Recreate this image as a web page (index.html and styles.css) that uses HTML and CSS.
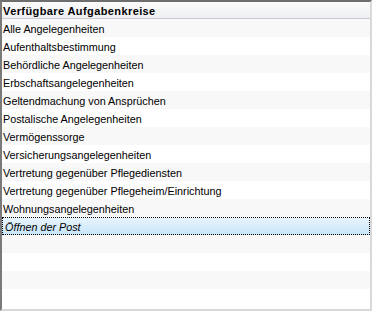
FILE: index.html
```html
<!DOCTYPE html>
<html lang="de">
<head>
<meta charset="utf-8">
<title>Verfügbare Aufgabenkreise</title>
<link rel="stylesheet" href="styles.css">
</head>
<body>
<div class="grid">
  <div class="head">Verfügbare Aufgabenkreise</div>
  <div class="rows">
    <div class="row">Alle Angelegenheiten</div>
    <div class="row">Aufenthaltsbestimmung</div>
    <div class="row">Behördliche Angelegenheiten</div>
    <div class="row">Erbschaftsangelegenheiten</div>
    <div class="row">Geltendmachung von Ansprüchen</div>
    <div class="row">Postalische Angelegenheiten</div>
    <div class="row">Vermögenssorge</div>
    <div class="row">Versicherungsangelegenheiten</div>
    <div class="row">Vertretung gegenüber Pflegediensten</div>
    <div class="row">Vertretung gegenüber Pflegeheim/Einrichtung</div>
    <div class="row">Wohnungsangelegenheiten</div>
    <div class="row selected">Öffnen der Post</div>
    <div class="row"></div>
    <div class="row"></div>
    <div class="row"></div>
    <div class="row"></div>
  </div>
</div>
</body>
</html>
```
FILE: styles.css
```css
html, body {
  margin: 0;
  padding: 0;
  background: #ffffff;
}
.grid {
  width: 372px;
  height: 311px;
  box-sizing: border-box;
  border-top: 2px solid #6e6e6e;
  border-left: 2px solid #7a7a7a;
  border-right: 2px solid #d9d9d9;
  border-bottom: 2px solid #d9d9d9;
  display: flex;
  flex-direction: column;
  overflow: hidden;
  font-family: "Liberation Sans", Arial, sans-serif;
  font-size: 10.8px;
  color: #000;
}
.head {
  height: 16px;
  line-height: 18px;
  flex: none;
  padding-left: 1px;
  font-weight: bold;
  font-size: 11px;
  letter-spacing: 0.4px;
  background: linear-gradient(#fbfbfc, #eef0f4);
  border-bottom: 1px solid #c9cbcf;
  overflow: hidden;
}
.rows {
  flex: 1;
  display: flex;
  flex-direction: column;
}
.row {
  height: 18px;
  line-height: 20px;
  flex: none;
  padding-left: 1px;
  white-space: nowrap;
  overflow: hidden;
  background: #ffffff;
}
.row:nth-child(odd) {
  background: #f8f8f8;
}
.row.selected {
  font-style: italic;
  padding-left: 3px;
  background: linear-gradient(#eaf5fd, #c7e5f8);
  outline: 1px dotted #000;
  outline-offset: -1px;
}
```
